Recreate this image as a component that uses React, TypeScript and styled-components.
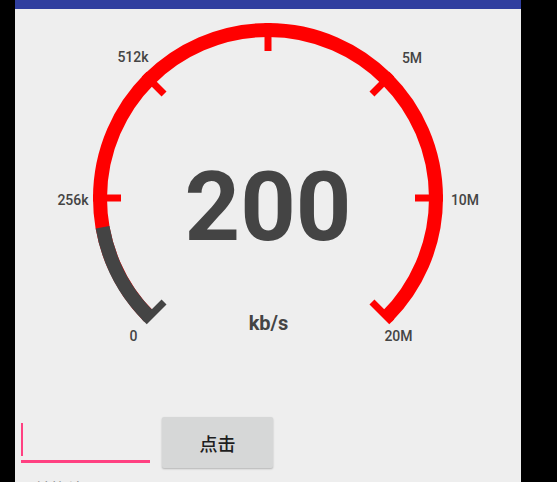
import React from "react";
import styled, { createGlobalStyle } from "styled-components";

const GlobalStyle = createGlobalStyle`
  html, body {
    margin: 0;
    padding: 0;
    background: #000000;
    overflow: hidden;
  }
  body {
    font-family: Roboto, "Noto Sans CJK SC", sans-serif;
  }
`;

const Page = styled.div`
  display: flex;
  height: 100vh;
  background: #000000;
`;

const Screen = styled.div`
  margin-left: 15px;
  width: 506px;
  height: 100vh;
  background: #eeeeee;
  display: flex;
  flex-direction: column;
  overflow: hidden;
`;

const StatusBar = styled.div`
  height: 9px;
  flex: none;
  background: #303f9f;
`;

const GaugeSvg = styled.svg`
  display: block;
  flex: none;
`;

const InputRow = styled.div`
  display: flex;
  align-items: flex-start;
  margin-top: 68px;
  padding-left: 6px;
`;

const Field = styled.div`
  position: relative;
  width: 129px;
  height: 52px;
  flex: none;
`;

const Caret = styled.div`
  position: absolute;
  left: 0;
  top: 6px;
  width: 2px;
  height: 33px;
  background: #ff4081;
`;

const Underline = styled.div`
  position: absolute;
  left: 0;
  right: 0;
  top: 43px;
  height: 3px;
  background: #ff4081;
`;

const ActionButton = styled.button`
  margin-left: 12px;
  width: 111px;
  height: 51px;
  border: none;
  border-radius: 2px;
  background: #d6d7d7;
  box-shadow: 0 1px 2px rgba(0, 0, 0, 0.25);
  font-family: Roboto, "Noto Sans CJK SC", sans-serif;
  font-size: 18px;
  font-weight: 500;
  color: #1e1e1e;
  padding: 0;
  display: flex;
  align-items: center;
  justify-content: center;
`;

const ResultText = styled.div`
  margin-top: 9px;
  padding-left: 20px;
  font-family: "Noto Sans CJK SC", sans-serif;
  font-size: 16px;
  color: #777777;
  line-height: 20px;
`;

const CX = 253;
const CY = 189;
const R = 168;
const RED = "#ff0000";
const GRAY = "#444444";

const pt = (deg: number, r: number) => {
  const a = (deg * Math.PI) / 180;
  return [CX + r * Math.cos(a), CY - r * Math.sin(a)];
};

const arcPath = (from: number, to: number) => {
  const [x1, y1] = pt(from, R);
  const [x2, y2] = pt(to, R);
  const large = from - to > 180 ? 1 : 0;
  return `M ${x1} ${y1} A ${R} ${R} 0 ${large} 1 ${x2} ${y2}`;
};

const ticks = [225, 180, 135, 90, 45, 0, -45];
const valueAngle = 190;

const labels = [
  { t: "0", x: 118.5, y: 332 },
  { t: "256k", x: 58, y: 196 },
  { t: "512k", x: 118, y: 53 },
  { t: "5M", x: 397, y: 54 },
  { t: "10M", x: 450, y: 196 },
  { t: "20M", x: 383.5, y: 332 },
];

function Gauge() {
  return (
    <GaugeSvg width={506} height={340} viewBox="0 0 506 340">
      <path d={arcPath(225, -45)} stroke={RED} strokeWidth={14} fill="none" />
      <path d={arcPath(225, valueAngle)} stroke={GRAY} strokeWidth={14} fill="none" />
      {ticks.map((a) => {
        const [x1, y1] = pt(a, 147);
        const [x2, y2] = pt(a, 175);
        return (
          <line
            key={a}
            x1={x1}
            y1={y1}
            x2={x2}
            y2={y2}
            stroke={a >= valueAngle ? GRAY : RED}
            strokeWidth={7}
          />
        );
      })}
      {labels.map((l) => (
        <text
          key={l.t}
          x={l.x}
          y={l.y}
          textAnchor="middle"
          fontFamily="Roboto, sans-serif"
          fontWeight={500}
          fontSize={14}
          fill="#444444"
        >
          {l.t}
        </text>
      ))}
      <text
        x={253}
        y={231}
        textAnchor="middle"
        fontFamily="Roboto, sans-serif"
        fontWeight={700}
        fontSize={97}
        fill="#444444"
      >
        200
      </text>
      <text
        x={253.5}
        y={321}
        textAnchor="middle"
        fontFamily="Roboto, sans-serif"
        fontWeight={700}
        fontSize={20}
        fill="#444444"
      >
        kb/s
      </text>
    </GaugeSvg>
  );
}

export default function App() {
  return (
    <Page>
      <GlobalStyle />
      <Screen>
        <StatusBar />
        <Gauge />
        <InputRow>
          <Field>
            <Caret />
            <Underline />
          </Field>
          <ActionButton>点击</ActionButton>
        </InputRow>
        <ResultText>转换结果</ResultText>
      </Screen>
    </Page>
  );
}
